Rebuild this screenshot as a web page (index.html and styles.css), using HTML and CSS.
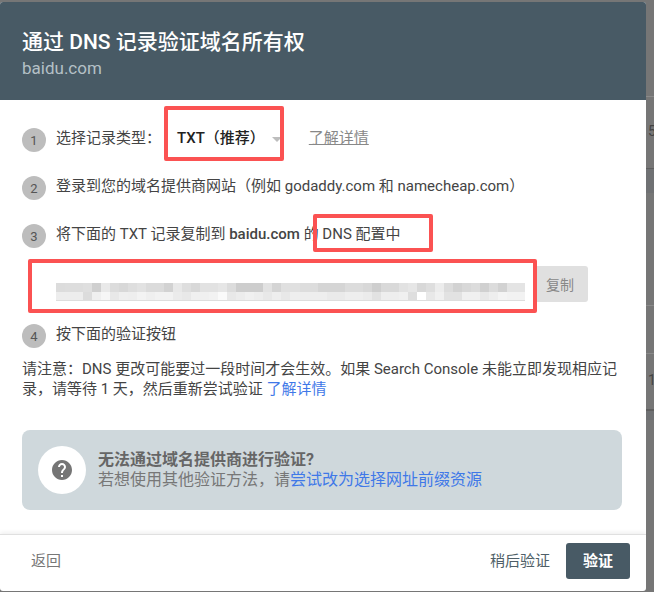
FILE: index.html
```html
<!DOCTYPE html>
<html lang="zh-CN">
<head>
    <meta charset="UTF-8">
    <meta name="viewport" content="width=device-width, initial-scale=1.0">
    <title>通过 DNS 记录验证域名所有权</title>
    <link rel="stylesheet" href="styles.css">
</head>
<body>
    <div class="page">
        <div class="dialog">
            <div class="dialog-header">
                <h1>通过 DNS 记录验证域名所有权</h1>
                <div class="domain">baidu.com</div>
            </div>
            <div class="dialog-body">
                <div class="step">
                    <span class="step-num">1</span>
                    <span class="step-text">选择记录类型：</span>
                    <span class="record-type">TXT（推荐）</span>
                    <span class="arrow"></span>
                    <a class="learn-more" href="#">了解详情</a>
                </div>
                <div class="step">
                    <span class="step-num">2</span>
                    <span class="step-text">登录到您的域名提供商网站（例如 godaddy.com 和 namecheap.com）</span>
                </div>
                <div class="step">
                    <span class="step-num">3</span>
                    <span class="step-text">将下面的 TXT 记录复制到 <b>baidu.com</b> 的 DNS 配置中</span>
                </div>
                <div class="record-row">
                    <div class="record-field">
                        <div class="blur-top"></div>
                        <div class="blur-bottom"></div>
                    </div>
                    <button class="copy-btn">复制</button>
                </div>
                <div class="step">
                    <span class="step-num">4</span>
                    <span class="step-text">按下面的验证按钮</span>
                </div>
                <p class="note">请注意：DNS 更改可能要过一段时间才会生效。如果 Search Console 未能立即发现相应记录，请等待 1 天，然后重新尝试验证 <a href="#">了解详情</a></p>
                <div class="help-box">
                    <div class="help-icon">
                        <svg width="24" height="24" viewBox="0 0 24 24"><path fill="#757575" d="M12 2C6.48 2 2 6.48 2 12s4.48 10 10 10 10-4.48 10-10S17.52 2 12 2zm1 17h-2v-2h2v2zm2.07-7.75l-.9.92C13.45 12.9 13 13.5 13 15h-2v-.5c0-1.1.45-2.1 1.17-2.83l1.24-1.26c.37-.36.59-.86.59-1.41 0-1.1-.9-2-2-2s-2 .9-2 2H8c0-2.21 1.79-4 4-4s4 1.79 4 4c0 .88-.36 1.68-.93 2.25z"/></svg>
                    </div>
                    <div class="help-text">
                        <div class="help-title">无法通过域名提供商进行验证?</div>
                        <div>若想使用其他验证方法，请<a href="#">尝试改为选择网址前缀资源</a></div>
                    </div>
                </div>
            </div>
            <div class="dialog-footer">
                <a class="back" href="#">返回</a>
                <a class="later" href="#">稍后验证</a>
                <button class="verify-btn">验证</button>
            </div>

            <!-- red annotation boxes drawn over the screenshot -->
            <div class="mark mark-type"></div>
            <div class="mark mark-dns"></div>
            <div class="mark mark-record"></div>
        </div>
        <div class="backdrop">
            <div class="bg-row bg-a"></div>
            <div class="bg-row bg-b">5</div>
            <div class="bg-row bg-c"></div>
            <div class="bg-row bg-d"></div>
            <div class="bg-row bg-e"></div>
            <div class="bg-row bg-f">1</div>
            <div class="bg-row bg-g"></div>
        </div>
    </div>
</body>
</html>
```

FILE: styles.css
```css
* {
    box-sizing: border-box;
}

body {
    margin: 0;
    font-family: Roboto, "Noto Sans CJK SC", sans-serif;
    font-size: 15px;
    color: #444;
    background-color: #767676;
    overflow: hidden;
}

a {
    text-decoration: none;
}

.page {
    display: flex;
    width: 654px;
    height: 592px;
    padding-top: 2px;
}

.dialog {
    position: relative;
    display: flex;
    flex-direction: column;
    width: 646px;
    height: 589px;
    background-color: #fff;
    border-radius: 3px;
    overflow: hidden;
}

.dialog-header {
    height: 98px;
    padding: 26px 22px 0;
    background-color: #485a65;
}

.dialog-header h1 {
    margin: 0;
    font-size: 21px;
    font-weight: 500;
    line-height: 28px;
    color: #fff;
}

.domain {
    font-size: 17px;
    line-height: 24px;
    color: #b4c0c6;
}

.dialog-body {
    flex: 1;
    padding: 28px 24px 0 22px;
}

.step {
    display: flex;
    align-items: flex-start;
    height: 24px;
    margin-bottom: 24px;
    line-height: 20px;
}

.step-num {
    flex: none;
    width: 24px;
    height: 24px;
    margin-right: 10px;
    border-radius: 50%;
    background-color: #bdbdbd;
    color: #555;
    font-size: 13px;
    line-height: 26px;
    text-align: center;
}

.step-text b {
    font-weight: 500;
}

.record-type {
    margin-left: 16px;
    font-weight: 500;
    color: #222;
}

.arrow {
    width: 0;
    height: 0;
    margin: 9px 0 0 7px;
    border-left: 5px solid transparent;
    border-right: 5px solid transparent;
    border-top: 5px solid #bdbdbd;
}

.learn-more {
    margin-left: 27px;
    color: #888;
    text-decoration: underline;
}

.record-row {
    display: flex;
    align-items: flex-start;
    gap: 9px;
    margin: -6px 0 22px 34px;
}

.record-field {
    width: 469px;
    height: 35px;
    padding-top: 17px;
}

.blur-top {
    height: 9px;
    background: linear-gradient(90deg, #dcdcdc 0 9px, #ddd 0 27px, #dfdfdf 0 36px, #cfcfcf 0 45px, #e9e9e9 0 54px, #dcdcdc 0 63px, #d8d8d8 0 72px, #dedede 0 81px, #e2e2e2 0 90px, #dbdbdb 0 108px, #d2d2d2 0 117px, #e8e8e8 0 126px, #dedede 0 135px, #d8d8d8 0 144px, #e2e2e2 0 162px, #e6e6e6 0 171px, #dcdcdc 0 180px, #cdcdcd 0 207px, #e2e2e2 0 216px, #d4d4d4 0 225px, #e0e0e0 0 244px, #ddd 0 262px, #d5d5d5 0 289px, #dcdcdc 0 307px, #d8d8d8 0 316px, #cecece 0 325px, #d9d9d9 0 343px, #e2e2e2 0 352px, #e6e6e6 0 361px, #d8d8d8 0 370px, #dedede 0 379px, #ececec 0 388px, #dcdcdc 0 397px, #d2d2d2 0 406px, #d8d8d8 0 415px, #dcdcdc 0 424px, #d0d0d0 0 433px, #dcdcdc 0 442px, #d2d2d2 0 451px, #e4e4e4 0 469px);
}

.blur-bottom {
    height: 9px;
    border-bottom: 1px solid #ddd;
    background: linear-gradient(90deg, #ededed 0 27px, #dcdcdc 0 36px, #efefef 0 45px, #f6f6f6 0 54px, #e8e8e8 0 63px, #efefef 0 72px, #eee 0 81px, #f3f3f3 0 90px, #efefef 0 99px, #f2f2f2 0 117px, #ebebeb 0 126px, #e8e8e8 0 135px, #f0f0f0 0 153px, #f2f2f2 0 162px, #fafafa 0 171px, #e8e8e8 0 180px, #ececec 0 189px, #f0f0f0 0 198px, #ededed 0 207px, #e8e8e8 0 216px, #eee 0 225px, #e8e8e8 0 234px, #eee 0 271px, #eaeaea 0 289px, #eee 0 307px, #ebebeb 0 316px, #e2e2e2 0 325px, #eee 0 343px, #f0f0f0 0 352px, #dedede 0 361px, #fff 0 370px, #e8e8e8 0 379px, #f0f0f0 0 388px, #e2e2e2 0 406px, #f0f0f0 0 424px, #e8e8e8 0 433px, #eee 0 442px, #f4f4f4 0 451px, #f2f2f2 0 469px);
}

.copy-btn {
    width: 54px;
    height: 36px;
    padding: 0 2px 0 0;
    border: none;
    border-radius: 3px;
    background-color: #e0e0e0;
    color: #888;
    font: inherit;
    font-size: 14px;
}

.note {
    margin: -13px 0 31px;
    line-height: 20px;
}

.note a,
.help-text a {
    color: #3f78e8;
}

.help-box {
    display: flex;
    align-items: center;
    gap: 12px;
    width: 600px;
    height: 80px;
    padding-left: 16px;
    border-radius: 8px;
    background-color: #cfd8dc;
    font-size: 16px;
    line-height: 20px;
    color: #777;
}

.help-icon {
    display: flex;
    align-items: center;
    justify-content: center;
    width: 48px;
    height: 48px;
    border-radius: 50%;
    background-color: #fff;
}

.help-title {
    font-weight: 700;
    color: #666;
}

.dialog-footer {
    display: flex;
    align-items: center;
    flex: none;
    height: 57px;
    padding: 0 16px 4px 31px;
    border-top: 1px solid #e0e0e0;
    box-shadow: 0 -2px 4px rgba(0, 0, 0, 0.06);
    font-size: 15px;
}

.back {
    margin: 0 auto 3px 0;
    color: #777;
}

.later {
    margin: 0 16px 3px 0;
    color: #4f5f68;
}

.verify-btn {
    width: 64px;
    height: 36px;
    padding: 0 0 3px;
    border: none;
    border-radius: 3px;
    background-color: #485a65;
    color: #fff;
    font: inherit;
    font-weight: 700;
}

/* annotation boxes */
.mark {
    position: absolute;
    border: 4px solid #fb5252;
    border-radius: 2px;
}

.mark-type {
    left: 164px;
    top: 104px;
    width: 120px;
    height: 55px;
}

.mark-dns {
    left: 313px;
    top: 212px;
    width: 120px;
    height: 38px;
}

.mark-record {
    left: 28px;
    top: 257px;
    width: 509px;
    height: 54px;
}

/* page behind the dialog, only a sliver shows */
.backdrop {
    flex: 1;
    display: flex;
    flex-direction: column;
    min-width: 0;
    overflow: hidden;
    color: #444;
    font-size: 14px;
}

.bg-row {
    padding-left: 2px;
    border-bottom: 1px solid #8a8a8a;
}

.bg-a {
    height: 95px;
}

.bg-b {
    height: 72px;
    padding-top: 26px;
    border-bottom-color: #5f5f5f;
}

.bg-c {
    height: 24px;
    background-color: #6f7173;
    border-bottom: none;
}

.bg-d {
    height: 113px;
}

.bg-e {
    height: 48px;
}

.bg-f {
    height: 57px;
    padding-top: 18px;
    border-bottom: 2px solid #5f5f5f;
}

.bg-g {
    height: 9px;
    background-color: #6f7173;
    border-bottom: none;
}
```
